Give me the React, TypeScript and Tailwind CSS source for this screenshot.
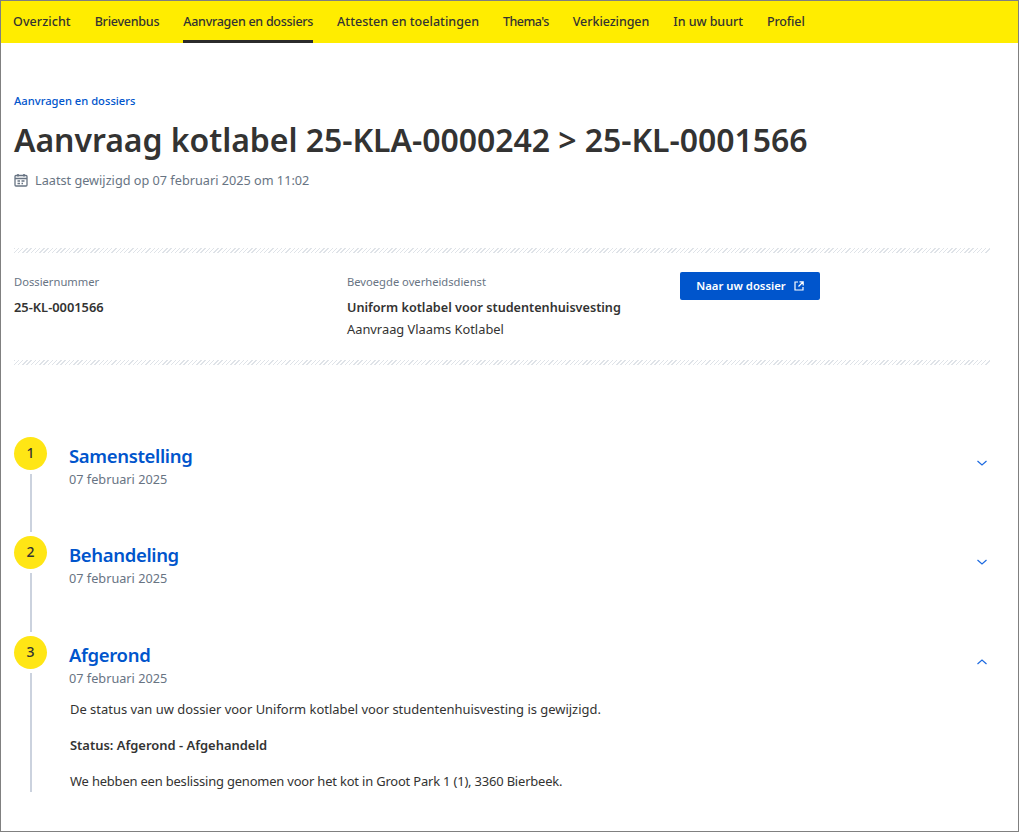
import React from 'react';

const navItems = [
    { label: 'Overzicht', tracking: 'tracking-[0.08px]' },
    { label: 'Brievenbus', tracking: 'tracking-[-0.24px]' },
    { label: 'Aanvragen en dossiers', tracking: 'tracking-[-0.28px]' },
    { label: 'Attesten en toelatingen', tracking: 'tracking-[0.03px]' },
    { label: "Thema's", tracking: 'tracking-[-0.55px]' },
    { label: 'Verkiezingen', tracking: 'tracking-[-0.06px]' },
    { label: 'In uw buurt', tracking: 'tracking-[-0.05px]' },
    { label: 'Profiel', tracking: 'tracking-[-0.14px]' },
];

const Divider = () => (
    <div className="h-[5px] w-[976px] bg-[repeating-linear-gradient(135deg,#dfe3e8_0px,#dfe3e8_1px,#ffffff_1px,#ffffff_3px)]" />
);

const Chevron = ({ up }: { up?: boolean }) => (
    <svg width="12" height="12" viewBox="0 0 12 12" fill="none" stroke="#1d6ae0" strokeWidth="1.2" className="shrink-0">
        <path d={up ? 'M1.5 8 L6 4 L10.5 8' : 'M1.5 4 L6 8 L10.5 4'} />
    </svg>
);

interface StepProps {
    number: number;
    title: string;
    height: string;
    open?: boolean;
    last?: boolean;
    children?: React.ReactNode;
}

const Step: React.FC<StepProps> = ({ number, title, height, open, last, children }) => (
    <div className={`flex ${height}`}>
        <div className="flex w-[33px] shrink-0 flex-col items-center">
            <div className="flex h-[33px] w-[33px] items-center justify-center rounded-full bg-[#ffe615] pb-[2px] text-[14px] font-medium leading-none text-[#333332]">
                {number}
            </div>
            <div className={last ? 'mt-[4px] w-[2px] flex-1 bg-[#cbd2de]' : 'mb-[4px] mt-[4px] w-[2px] flex-1 bg-[#cbd2de]'} />
        </div>
        <div className="ml-[22px] flex-1">
            <div className="flex items-start justify-between">
                <div className="pt-[5px]">
                    <h2 className="text-[18.5px] font-semibold leading-[28px] tracking-[-0.35px] text-[#0055cc]">{title}</h2>
                    <p className="text-[12.7px] leading-[18px] text-[#687483]">07 februari 2025</p>
                </div>
                <div className="mr-[2px] mt-[20px]">
                    <Chevron up={open} />
                </div>
            </div>
            {children}
        </div>
    </div>
);

export default function App() {
    return (
        <div className="box-border h-[832px] w-[1019px] overflow-hidden border border-[#808080] bg-white font-['Noto_Sans',sans-serif] text-[#333332]">
            <nav className="flex h-[42px] gap-[24px] bg-[#ffed00] pl-[12px]">
                {navItems.map((item, i) => (
                    <a
                        key={item.label}
                        className={`h-full pt-[12px] text-[12.5px] font-medium leading-[18px] text-[#333332] ${item.tracking} ${i === 2 ? 'border-b-[3px] border-[#2b2b2b]' : ''}`}
                    >
                        {item.label}
                    </a>
                ))}
            </nav>

            <main className="pl-[13px]">
                <a className="mt-[50px] block text-[11.2px] font-medium leading-[16px] text-[#0055cc]">Aanvragen en dossiers</a>
                <h1 className="mt-[10px] text-[32px] font-semibold leading-[42px] tracking-[-0.05px] text-[#333332]">
                    Aanvraag kotlabel 25-KLA-0000242 &gt; 25-KL-0001566
                </h1>
                <div className="mt-[10px] flex items-center gap-[7px] text-[12.7px] leading-[18px] text-[#687483]">
                    <svg width="14" height="14" viewBox="0 0 14 14" fill="none" stroke="#687483" strokeWidth="1.3">
                        <rect x="1" y="2.5" width="12" height="10.5" rx="1" />
                        <path d="M1 5.5 H13 M4 1 V3.5 M10 1 V3.5" strokeWidth="1.6" />
                        <path d="M3.5 8 H6 M7.5 8 H10.5 M3.5 10.5 H6 M7.5 10.5 H9" strokeWidth="1.6" />
                    </svg>
                    <span>Laatst gewijzigd op 07 februari 2025 om 11:02</span>
                </div>

                <div className="mt-[59px]">
                    <Divider />
                </div>
                <div className="grid h-[107px] grid-cols-[333px_333px_1fr] pt-[19px] text-[12.85px] leading-[18px]">
                    <div className="pt-[1px]">
                        <p className="text-[11.2px] text-[#687483]">Dossiernummer</p>
                        <p className="mt-[7px] font-semibold">25-KL-0001566</p>
                    </div>
                    <div className="pt-[1px]">
                        <p className="text-[11.2px] text-[#687483]">Bevoegde overheidsdienst</p>
                        <p className="mt-[7px] text-[12.65px] font-semibold">Uniform kotlabel voor studentenhuisvesting</p>
                        <p className="mt-[4px]">Aanvraag Vlaams Kotlabel</p>
                    </div>
                    <div>
                        <button className="flex h-[28px] w-[140px] items-center justify-center gap-[8px] rounded-[2px] bg-[#0055cc] text-[11.3px] font-semibold text-white">
                            Naar uw dossier
                            <svg width="10" height="10" viewBox="0 0 10 10" fill="none" stroke="#ffffff" strokeWidth="1.2">
                                <path d="M4 1 H1 V9 H9 V6 M5.5 0.8 H9.2 V4.5 M9 1 L4.5 5.5" />
                            </svg>
                        </button>
                    </div>
                </div>
                <Divider />

                <div className="mt-[72px] w-[976px]">
                    <Step number={1} title="Samenstelling" height="h-[99px]" />
                    <Step number={2} title="Behandeling" height="h-[100px]" />
                    <Step number={3} title="Afgerond" height="h-[156px]" open last>
                        <div className="ml-[1px] mt-[13px] text-[12.95px] leading-[18px] text-[#333332]">
                            <p>De status van uw dossier voor Uniform kotlabel voor studentenhuisvesting is gewijzigd.</p>
                            <p className="mt-[18px] font-semibold">Status: Afgerond - Afgehandeld</p>
                            <p className="mt-[18px] tracking-[-0.18px]">We hebben een beslissing genomen voor het kot in Groot Park 1 (1), 3360 Bierbeek.</p>
                        </div>
                    </Step>
                </div>
            </main>
        </div>
    );
}
